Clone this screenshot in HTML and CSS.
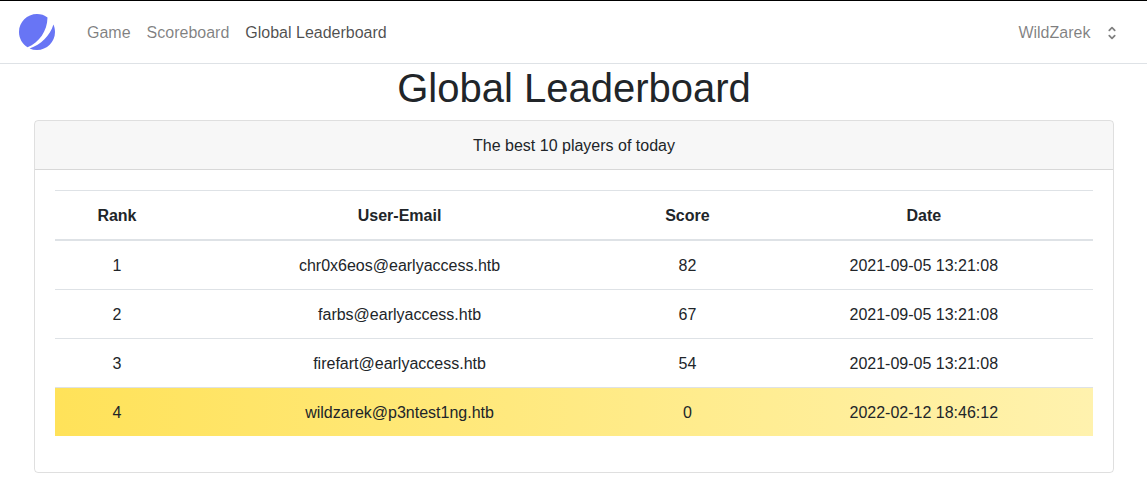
FILE: index.html
```html
<!DOCTYPE html>
<html lang="en">
<head>
<meta charset="utf-8">
<title>Global Leaderboard</title>
<link rel="stylesheet" href="styles.css">
</head>
<body>
<nav class="navbar">
  <a class="brand">
    <svg class="logo" viewBox="0 0 48 48" fill="#6875F5"><path d="M11.395 44.428C4.557 40.198 0 32.632 0 24 0 10.745 10.745 0 24 0a23.891 23.891 0 0113.997 4.502c-.2 17.907-11.097 33.245-26.602 39.926z"/><path d="M14.134 45.885A23.914 23.914 0 0024 48c13.255 0 24-10.745 24-24 0-3.516-.756-6.856-2.115-9.866-4.659 15.143-16.608 27.092-31.75 31.751z"/></svg>
  </a>
  <div class="links">
    <a class="link">Game</a>
    <a class="link">Scoreboard</a>
    <a class="link active">Global Leaderboard</a>
  </div>
  <a class="link user">WildZarek
    <svg class="selector" viewBox="0 0 20 20" fill="currentColor"><path fill-rule="evenodd" clip-rule="evenodd" d="M10 3a1 1 0 01.707.293l3 3a1 1 0 01-1.414 1.414L10 5.414 7.707 7.707a1 1 0 01-1.414-1.414l3-3A1 1 0 0110 3zm-3.707 9.293a1 1 0 011.414 0L10 14.586l2.293-2.293a1 1 0 011.414 1.414l-3 3a1 1 0 01-1.414 0l-3-3a1 1 0 010-1.414z"/></svg>
  </a>
</nav>
<main class="page">
  <h1 class="title">Global Leaderboard</h1>
  <section class="card">
    <div class="card-header">The best 10 players of today</div>
    <div class="card-body">
      <table class="table">
        <colgroup><col class="col-rank"><col class="col-email"><col class="col-score"><col class="col-date"></colgroup>
        <thead>
          <tr><th>Rank</th><th>User-Email</th><th>Score</th><th>Date</th></tr>
        </thead>
        <tbody>
          <tr><td>1</td><td>chr0x6eos@earlyaccess.htb</td><td>82</td><td>2021-09-05 13:21:08</td></tr>
          <tr><td>2</td><td>farbs@earlyaccess.htb</td><td>67</td><td>2021-09-05 13:21:08</td></tr>
          <tr><td>3</td><td>firefart@earlyaccess.htb</td><td>54</td><td>2021-09-05 13:21:08</td></tr>
          <tr class="own"><td>4</td><td>wildzarek@p3ntest1ng.htb</td><td>0</td><td>2022-02-12 18:46:12</td></tr>
        </tbody>
      </table>
    </div>
  </section>
</main>
</body>
</html>
```
FILE: styles.css
```css
*, *::before, *::after { box-sizing: border-box; }
body {
  margin: 0;
  background: #fff;
  color: #212529;
  font: 16px/1.5 "Liberation Sans", Arial, sans-serif;
}
.navbar {
  display: flex;
  align-items: center;
  height: 64px;
  padding: 0 26px 0 19px;
  border-top: 1px solid #000;
  border-bottom: 1px solid #dee2e6;
}
.brand { display: flex; margin-right: 32px; }
.logo { width: 36px; height: 36px; }
.links { display: flex; gap: 16px; padding-top: 2px; }
.link { color: rgba(0, 0, 0, .5); }
.link.active { color: rgba(0, 0, 0, .7); }
.user {
  display: flex;
  align-items: center;
  gap: 12.6px;
  margin-left: auto;
  padding-top: 2px;
}
.selector { width: 18px; height: 18px; }
.page { padding: 0 33px 0 34px; }
.title {
  margin: 0 0 8px;
  font-size: 40px;
  font-weight: 500;
  line-height: 1.2;
  text-align: center;
}
.card {
  border: 1px solid rgba(0, 0, 0, .125);
  border-radius: 4px;
}
.card-header {
  padding: 13px 20px 11px;
  background: rgba(0, 0, 0, .03);
  border-bottom: 1px solid rgba(0, 0, 0, .125);
  border-radius: 3px 3px 0 0;
  text-align: center;
}
.card-body { padding: 20px; }
.table {
  width: 100%;
  margin-bottom: 16px;
  border-collapse: collapse;
  table-layout: fixed;
  text-align: center;
}
.col-rank { width: 123.9px; }
.col-email { width: 441.3px; }
.col-score { width: 134.4px; }
.col-date { width: 338.4px; }
.table th, .table td {
  padding: 13px 12px 11px;
  border-top: 1px solid #dee2e6;
}
.table thead th { border-bottom: 2px solid #dee2e6; }
.own { background: linear-gradient(to right, #ffe259, #fff2ae); }
```
